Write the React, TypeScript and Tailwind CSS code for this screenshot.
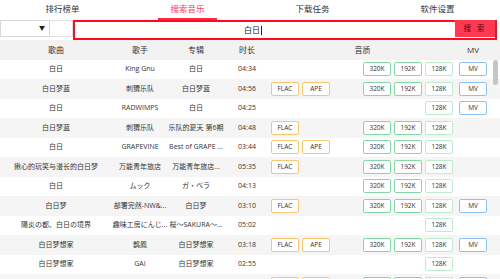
import React from 'react';

type Song = {
  name: string;
  singer: string;
  album: string;
  time: string;
  lossless: string[];
  rates: string[];
  mv: boolean;
};

const songs: Song[] = [
  { name: '白日', singer: 'King Gnu', album: '白日', time: '04:34', lossless: [], rates: ['320K', '192K', '128K'], mv: true },
  { name: '白日梦蓝', singer: '刺猬乐队', album: '白日梦蓝', time: '04:56', lossless: ['FLAC', 'APE'], rates: ['320K', '192K', '128K'], mv: true },
  { name: '白日', singer: 'RADWIMPS', album: '白日', time: '04:25', lossless: [], rates: ['128K'], mv: true },
  { name: '白日梦蓝', singer: '刺猬乐队', album: '乐队的夏天 第6期', time: '04:48', lossless: ['FLAC'], rates: ['320K', '192K', '128K'], mv: false },
  { name: '白日', singer: 'GRAPEVINE', album: 'Best of GRAPE ...', time: '03:44', lossless: ['FLAC', 'APE'], rates: ['320K', '192K', '128K'], mv: false },
  { name: '揪心的玩笑与漫长的白日梦', singer: '万能青年旅店', album: '万能青年旅店...', time: '05:35', lossless: ['FLAC'], rates: ['320K', '192K', '128K'], mv: false },
  { name: '白日', singer: 'ムック', album: 'ガ・ベラ', time: '04:13', lossless: [], rates: ['320K', '192K', '128K'], mv: false },
  { name: '白日梦', singer: '部署完然-NW&...', album: '白日梦', time: '03:10', lossless: ['FLAC'], rates: ['320K', '192K', '128K'], mv: true },
  { name: '陽炎の都、白日の境界', singer: '趣味工房にんじ...', album: '桜～SAKURA～...', time: '05:02', lossless: [], rates: ['128K'], mv: false },
  { name: '白日梦想家', singer: '鹊鳳', album: '白日梦想家', time: '03:18', lossless: ['FLAC', 'APE'], rates: ['320K', '192K', '128K'], mv: true },
  { name: '白日梦想家', singer: 'GAI', album: '白日梦想家', time: '02:55', lossless: [], rates: ['128K'], mv: false },
];

const tabs = ['排行榜单', '搜索音乐', '下载任务', '软件设置'];

function Badge({ label, kind }: { label: string; kind: 'lossless' | 'hi' | 'low' | 'mv' }) {
  const border =
    kind === 'lossless'
      ? 'border-[#fcc66e]'
      : kind === 'hi'
        ? 'border-[#83d9a5]'
        : kind === 'low'
          ? 'border-[#bdeccd]'
          : 'border-[#8cc3f3]';
  return (
    <div className={`flex h-[14px] w-[28px] items-center justify-center rounded-[2px] border bg-white text-[6.5px] text-[#333] ${border}`}>
      {label}
    </div>
  );
}

function Row({ s, striped, labels = true }: { s: Song; striped: boolean; labels?: boolean }) {
  return (
    <div className={`flex h-[19.5px] shrink-0 items-center text-[7px] ${striped ? 'bg-[#f5f5f5]' : 'bg-white'}`}>
      <div className="flex w-[112px] justify-center whitespace-nowrap">{s.name}</div>
      <div className="flex w-[56px] justify-center whitespace-nowrap">{s.singer}</div>
      <div className="flex w-[56px] justify-center whitespace-nowrap">{s.album}</div>
      <div className="flex w-[46px] justify-center whitespace-nowrap">{s.time}</div>
      <div className="flex w-[185px] items-center justify-between pl-[1px] pr-[2px]">
        <div className="flex gap-[3px]">
          {s.lossless.map((l, i) => (
            <Badge key={i} label={labels ? l : ''} kind="lossless" />
          ))}
        </div>
        <div className="flex gap-[3px]">
          {s.rates.map((r, i) => (
            <Badge key={i} label={labels ? r : ''} kind={i === s.rates.length - 1 ? 'low' : 'hi'} />
          ))}
        </div>
      </div>
      <div className="flex w-[36px] justify-center">{s.mv && <Badge label={labels ? 'MV' : ''} kind="mv" />}</div>
    </div>
  );
}

export default function App() {
  return (
    <div className="relative h-[279px] w-[500px] overflow-hidden bg-white font-['Open_Sans','Noto_Sans_CJK_SC',sans-serif] text-[#333]">
      {/* Tabs */}
      <div className="flex h-[20px]">
        {tabs.map((tab, i) => (
          <div key={tab} className="flex flex-1 flex-col items-center">
            <div className={`flex h-[18px] items-center text-[8.5px] ${i === 1 ? 'text-[#ff3a4c]' : 'text-[#333]'}`}>{tab}</div>
            {i === 1 && <div className="h-[1.5px] w-[59px] bg-[#ff2a3c]" />}
          </div>
        ))}
      </div>

      {/* Search row */}
      <div className="flex h-[20px] items-start">
        <div className="flex h-[17px] w-[50px] items-center justify-end border border-[#d8d8d8] bg-white pr-[4px] text-[6px] text-[#222]">
          ▼
        </div>
        <div className="h-[17px] w-[23px] border-y border-r border-[#e0e0e0] bg-white" />
        <div className="flex h-[20px] w-[424px] border-2 border-[#ff0a1e]">
          <div className="flex flex-1 items-center justify-center pr-[24px] text-[8px] text-[#222]">
            白日<span className="ml-[1px] h-[9px] w-[1px] bg-[#222]" />
          </div>
          <div className="-mt-[2px] flex h-[17px] w-[40px] items-center justify-center bg-[#ff3a50] text-[7.5px] tracking-[2px] text-[#5a0610]">
            搜 索
          </div>
        </div>
      </div>

      {/* Header */}
      <div className="flex h-[19.5px] items-center bg-[#f2f2f2] text-[8px] text-[#333]">
        <div className="w-[112px] text-center">歌曲</div>
        <div className="w-[56px] text-center">歌手</div>
        <div className="w-[56px] text-center">专辑</div>
        <div className="w-[46px] text-center">时长</div>
        <div className="w-[185px] text-center">音质</div>
        <div className="w-[36px] text-center">MV</div>
      </div>

      {/* Rows */}
      <div className="flex flex-col">
        {songs.map((s, i) => (
          <Row key={i} s={s} striped={i % 2 === 1} />
        ))}
        {/* partially visible row at the bottom edge */}
        <Row
          s={{ name: '', singer: '', album: '', time: '', lossless: ['FLAC', 'APE'], rates: ['320K', '192K', '128K'], mv: true }}
          striped
          labels={false}
        />
      </div>

      {/* Scrollbar thumb */}
      <div className="absolute left-[493px] top-[60px] h-[25px] w-[5px] rounded-[3px] bg-[#c6c6c6]" />
    </div>
  );
}
